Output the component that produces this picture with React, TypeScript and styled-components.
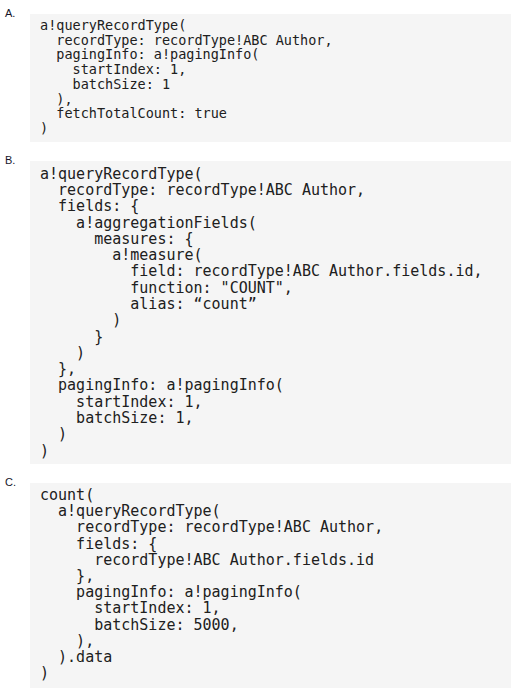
import React from "react";
import styled, { createGlobalStyle } from "styled-components";

const Global = createGlobalStyle`
  html, body { margin: 0; padding: 0; background: #ffffff; }
  body { font-family: "Liberation Sans", Arial, sans-serif; }
`;

const Page = styled.div`
  display: flex;
  flex-direction: column;
  gap: 13px;
  padding: 8px 5px 0 5px;
  width: 516px;
  box-sizing: border-box;
`;

const Section = styled.section`
  display: flex;
  align-items: flex-start;
`;

const Label = styled.div`
  width: 25px;
  flex: none;
  font-family: "Liberation Sans", Arial, sans-serif;
  font-size: 11px;
  line-height: 11px;
  color: #15152a;
`;

const Code = styled.pre<{ $size: number; $lh: number; $pt: number; $pb: number }>`
  flex: none;
  width: 481px;
  margin: 6px 0 0 0;
  box-sizing: border-box;
  padding: ${(p) => p.$pt}px 0 ${(p) => p.$pb}px 10px;
  background: #f5f5f5;
  color: #202020;
  font-family: "DejaVu Sans Mono", "Liberation Mono", monospace;
  font-size: ${(p) => p.$size}px;
  line-height: ${(p) => p.$lh}px;
  white-space: pre;
  overflow: hidden;
`;

const codeA = `a!queryRecordType(
  recordType: recordType!ABC Author,
  pagingInfo: a!pagingInfo(
    startIndex: 1,
    batchSize: 1
  ),
  fetchTotalCount: true
)`;

const codeB = `a!queryRecordType(
  recordType: recordType!ABC Author,
  fields: {
    a!aggregationFields(
      measures: {
        a!measure(
          field: recordType!ABC Author.fields.id,
          function: "COUNT",
          alias: \u201Ccount\u201D
        )
      }
    )
  },
  pagingInfo: a!pagingInfo(
    startIndex: 1,
    batchSize: 1,
  )
)`;

const codeC = `count(
  a!queryRecordType(
    recordType: recordType!ABC Author,
    fields: {
      recordType!ABC Author.fields.id
    },
    pagingInfo: a!pagingInfo(
      startIndex: 1,
      batchSize: 5000,
    ),
  ).data
)`;

export default function App() {
  return (
    <>
      <Global />
      <Page>
        <Section>
          <Label>A.</Label>
          <Code $size={13.5} $lh={14.7} $pt={4} $pb={6}>
            {codeA}
          </Code>
        </Section>
        <Section>
          <Label>B.</Label>
          <Code $size={15} $lh={16.3} $pt={5} $pb={5}>
            {codeB}
          </Code>
        </Section>
        <Section>
          <Label>C.</Label>
          <Code $size={15} $lh={16.2} $pt={4} $pb={7}>
            {codeC}
          </Code>
        </Section>
      </Page>
    </>
  );
}
